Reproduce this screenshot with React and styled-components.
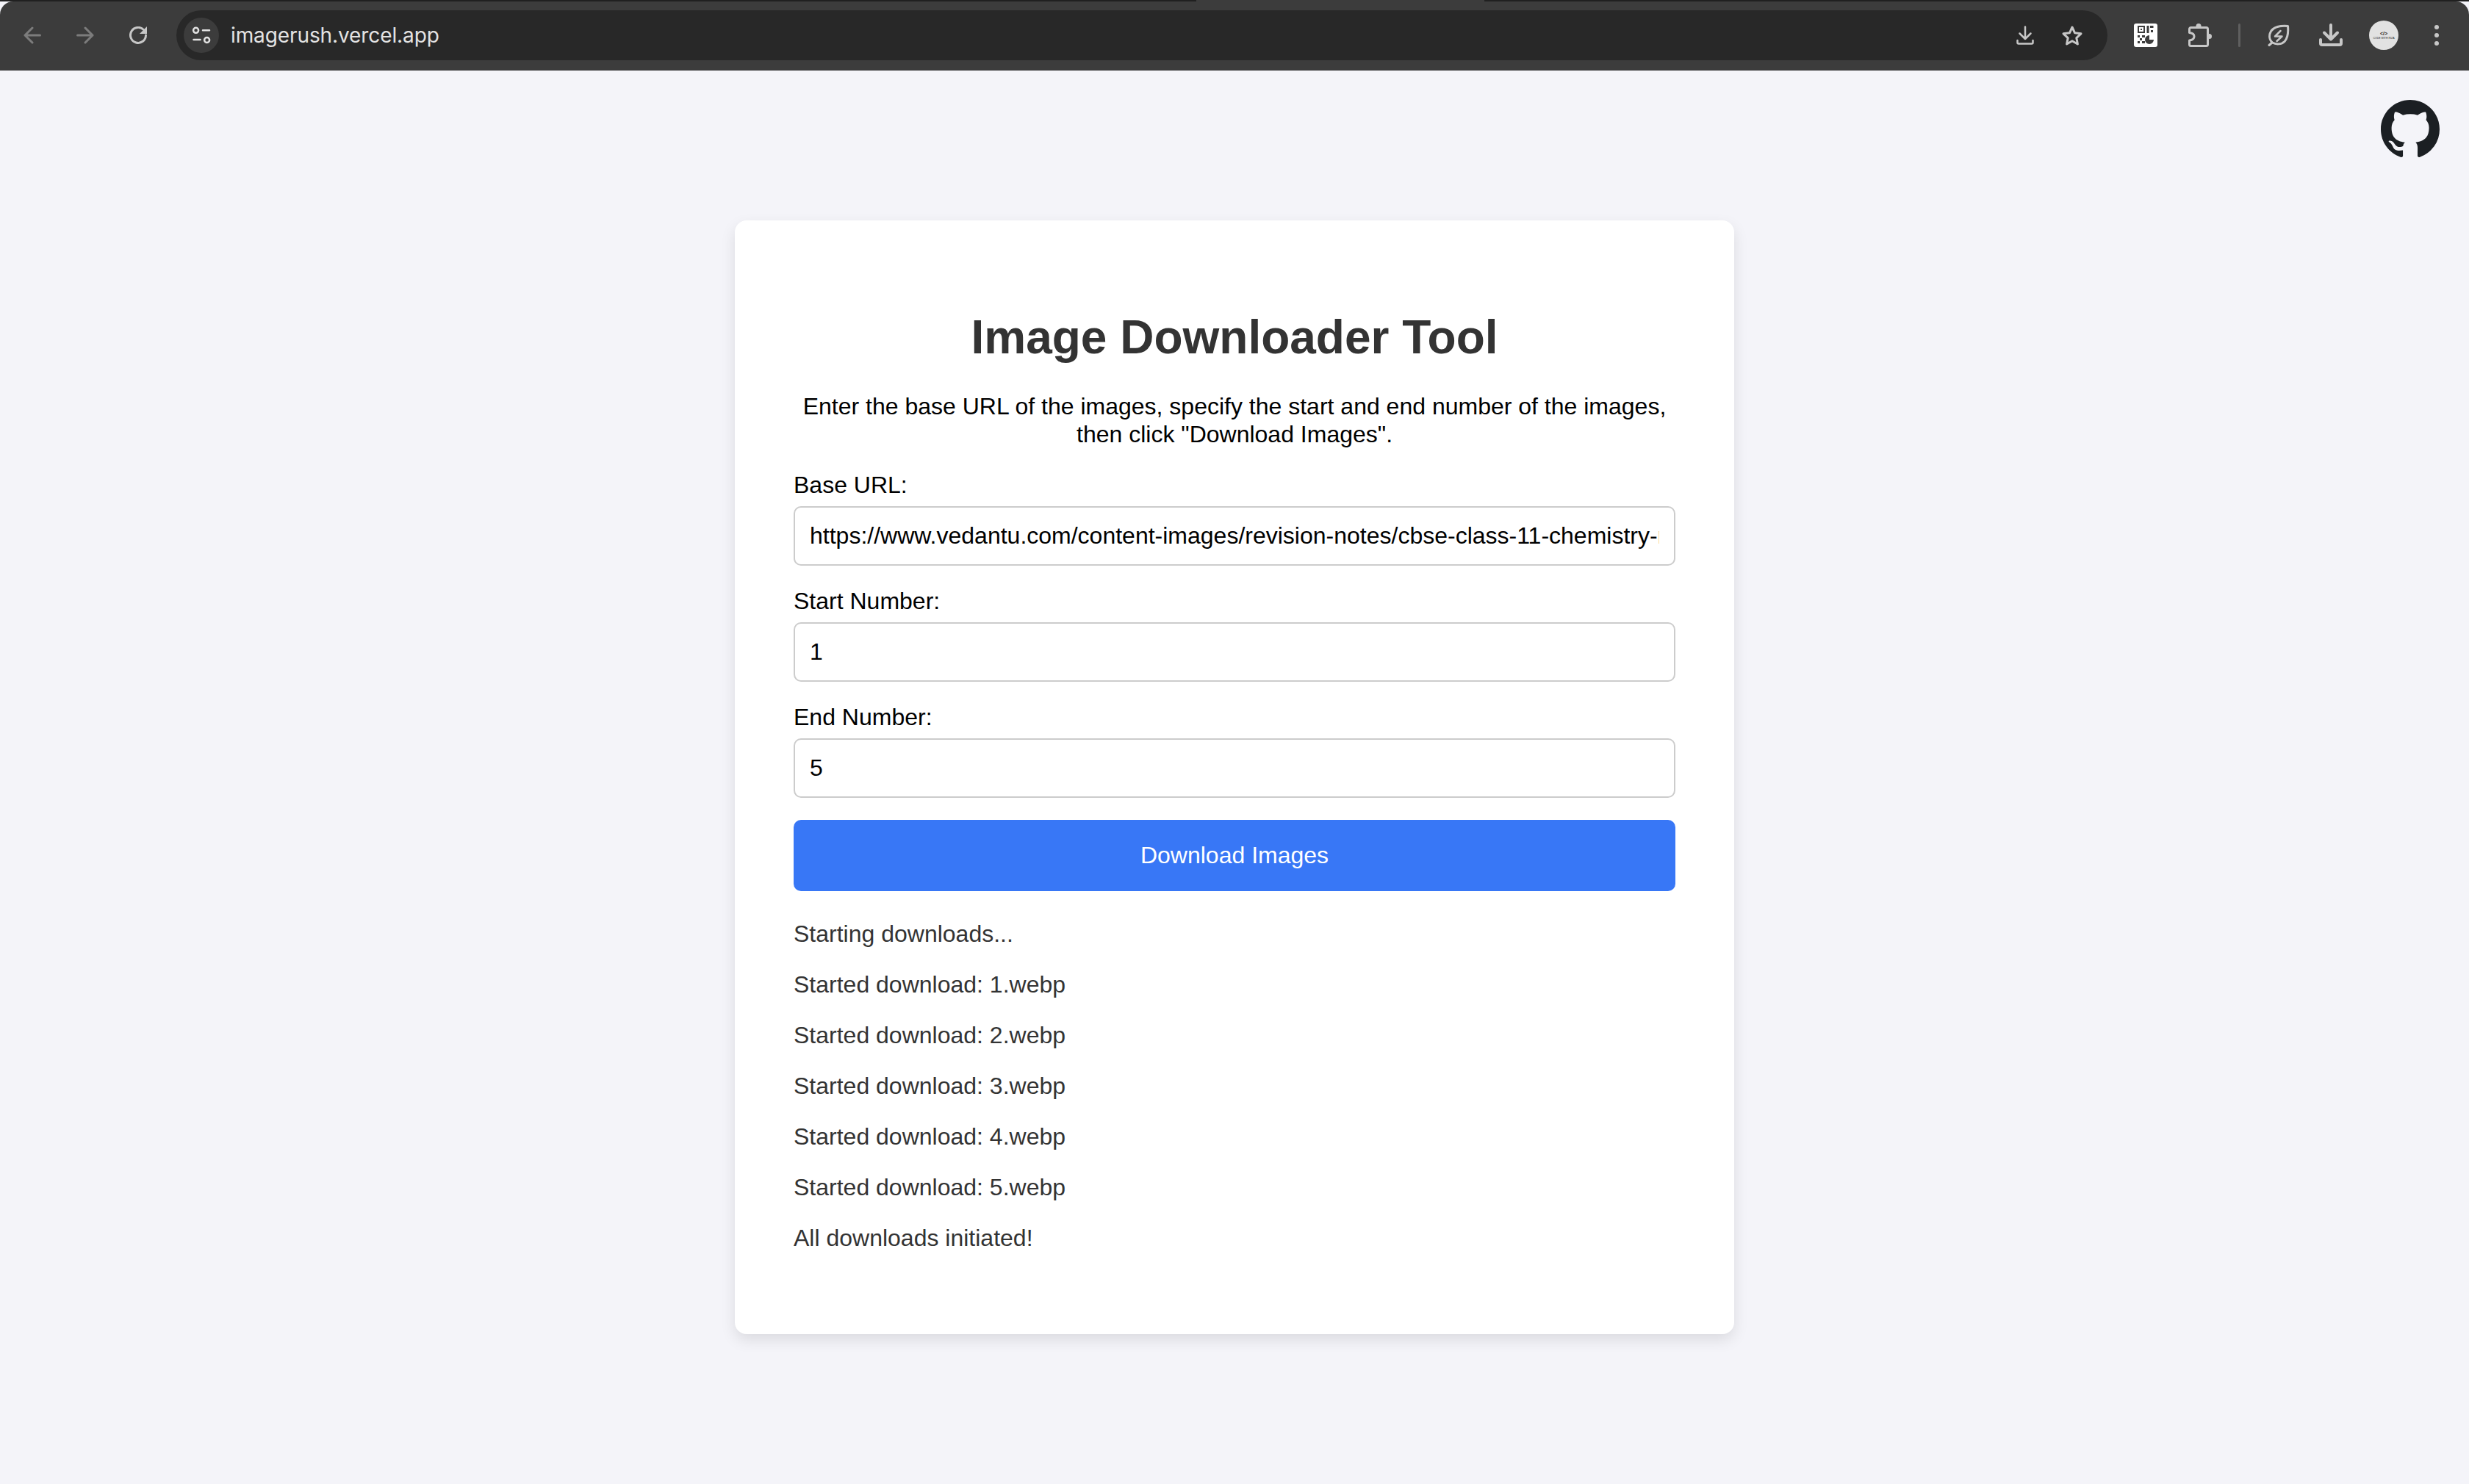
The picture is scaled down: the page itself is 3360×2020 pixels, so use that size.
import React from 'react';
import styled, { createGlobalStyle } from 'styled-components';

const GlobalStyle = createGlobalStyle`
  html, body {
    margin: 0;
    padding: 0;
    background-color: #f4f4f9;
  }
`;

const LOG_LINES = [
  'Starting downloads...',
  'Started download: 1.webp',
  'Started download: 2.webp',
  'Started download: 3.webp',
  'Started download: 4.webp',
  'Started download: 5.webp',
  'All downloads initiated!',
];

function Glyph({ w = 24, h = 24, sw = 3, children }) {
  return (
    <svg width={w} height={h} viewBox={`0 0 ${w} ${h}`} fill='none' stroke='currentColor' strokeWidth={sw} strokeLinecap='round' strokeLinejoin='round'>
      {children}
    </svg>
  );
}

function QrIcon() {
  return (
    <svg width='32' height='32' viewBox='0 0 32 32'>
      <rect width='32' height='32' rx='3' fill='#fff' />
      <g fill='#3c3c3c'>
        <path fillRule='evenodd' d='M5 3h10v10H5zM7 5v6h6V5z' />
        <rect x='9' y='7' width='2' height='2' />
        <rect x='17.500' y='3' width='3' height='10' />
        <rect x='22' y='3' width='4.500' height='3' />
        <rect x='23' y='9' width='3' height='3' />
        <rect x='5' y='16' width='3' height='3' />
        <rect x='11' y='16' width='4' height='3' />
        <rect x='8' y='20' width='3' height='3' />
        <rect x='5' y='24' width='3' height='3' />
        <rect x='11' y='24' width='4' height='3' />
        <path d='M21 16a6 6 0 1 0 6 6h-6z' />
      </g>
    </svg>
  );
}

function GithubMark() {
  return (
    <svg width='80' height='80' viewBox='0 0 16 16' fill='#1b1f23'>
      <path d='M8 0C3.58 0 0 3.58 0 8c0 3.54 2.29 6.53 5.47 7.59.4.07.55-.17.55-.38 0-.19-.01-.82-.01-1.49-2.01.37-2.53-.49-2.69-.94-.09-.23-.48-.94-.82-1.13-.28-.15-.68-.52-.01-.53.63-.01 1.08.58 1.23.82.72 1.21 1.87.87 2.33.66.07-.52.28-.87.51-1.07-1.78-.2-3.64-.89-3.64-3.95 0-.87.31-1.59.82-2.15-.08-.2-.36-1.02.08-2.12 0 0 .67-.21 2.2.82.64-.18 1.32-.27 2-.27s1.36.09 2 .27c1.53-1.04 2.2-.82 2.2-.82.44 1.1.16 1.92.08 2.12.51.56.82 1.27.82 2.15 0 3.07-1.87 3.75-3.65 3.95.29.25.54.73.54 1.48 0 1.07-.01 1.93-.01 2.2 0 .21.15.46.55.38A8.01 8.01 0 0 0 16 8c0-4.42-3.58-8-8-8z' />
    </svg>
  );
}

export default function App() {
  return (
    <Page>
      <GlobalStyle />
      <TabStrip>
        <ActiveTabEdge />
      </TabStrip>
      <Toolbar>
        <NavIcon $dim>
          <Glyph><path d='M22.500 12H2M12 2 2 12l10 10' /></Glyph>
        </NavIcon>
        <NavIcon $dim>
          <Glyph><path d='M1.500 12H22M12 2l10 10-10 10' /></Glyph>
        </NavIcon>
        <NavIcon>
          <Glyph>
            <path d='M22.500 12A10.500 10.500 0 1 1 19.500 4.500' />
            <path d='M24 0v10H14z' fill='currentColor' stroke='none' />
          </Glyph>
        </NavIcon>
        <AddressBar>
          <SiteChip>
            <Glyph w={48} h={48} sw={2.500}>
              <circle cx='16.600' cy='17.300' r='3.500' />
              <path d='M26 17.300h9M13.500 30h9' />
              <circle cx='31.600' cy='30.500' r='3.500' />
            </Glyph>
          </SiteChip>
          <UrlText>imagerush.vercel.app</UrlText>
          <BarActions>
            <Glyph w={24} h={26} sw={2.500}>
              <path d='M12 1.500v16.500M4.500 10.500 12 18l7.500-7.500' />
              <path d='M1.500 20v3a1.500 1.500 0 0 0 1.500 1.500h18a1.500 1.500 0 0 0 1.500-1.500v-3' />
            </Glyph>
            <Glyph w={30} h={29}>
              <path d='M15 3l3.600 7.800 8.400 1-6.200 5.800 1.600 8.400-7.400-4.200-7.400 4.200 1.600-8.400L3 11.800l8.400-1z' />
            </Glyph>
          </BarActions>
        </AddressBar>
        <Extensions>
          <ToolSlot $w={72}>
            <QrIcon />
          </ToolSlot>
          <ToolSlot $w={76}>
            <Glyph w={32} h={32}>
              <path d='M3.500 5.500h21a2 2 0 0 1 2 2v21a2 2 0 0 1-2 2h-21a2 2 0 0 1-2-2V23c4.500-.500 6.500-3 6.500-5.500S6 13 1.500 12.500v-5a2 2 0 0 1 2-2z' />
              <circle cx='14' cy='3.500' r='3.500' fill='currentColor' stroke='none' />
              <circle cx='28.500' cy='17.500' r='3.500' fill='currentColor' stroke='none' />
            </Glyph>
          </ToolSlot>
          <ToolSlot $w={30}>
            <Divider />
          </ToolSlot>
          <ToolSlot $w={78}>
            <Glyph w={30} h={30}>
              <path d='M27.500 2.500c1 10.500-.500 16.500-4.500 21-4 4-11.500 4.500-16.500 1.500C2 21 1.500 15 4.500 9.500 8 4 17 1.500 27.500 2.500z' />
              <path d='M6 25l-4 3.500' />
              <path d='M17.500 9 10 16.500h9.500L12.500 23' strokeWidth='2.500' />
            </Glyph>
          </ToolSlot>
          <ToolSlot $w={64}>
            <Glyph w={32} h={32} sw={4}>
              <path d='M16 2v19M7 12.500l9 9 9-9' />
              <path d='M2 22v5a2 2 0 0 0 2 2h24a2 2 0 0 0 2-2v-5' />
            </Glyph>
          </ToolSlot>
          <ToolSlot $w={80}>
            <Avatar>
              <AvatarGlyph>&lt;/&gt;</AvatarGlyph>
              <AvatarName>CODE WITH RIZA</AvatarName>
            </Avatar>
          </ToolSlot>
          <ToolSlot $w={64}>
            <MenuDots>
              <span />
              <span />
              <span />
            </MenuDots>
          </ToolSlot>
        </Extensions>
      </Toolbar>

      <Content>
        <GithubLink>
          <GithubMark />
        </GithubLink>
        <Card>
          <Title>Image Downloader Tool</Title>
          <Intro>
            Enter the base URL of the images, specify the start and end number of the images,
            <br />
            then click "Download Images".
          </Intro>
          <Field>
            <Label>Base URL:</Label>
            <Input readOnly value='https://www.vedantu.com/content-images/revision-notes/cbse-class-11-chemistry-notes/' />
          </Field>
          <Field>
            <Label>Start Number:</Label>
            <Input readOnly value='1' />
          </Field>
          <Field>
            <Label>End Number:</Label>
            <Input readOnly value='5' />
          </Field>
          <DownloadButton>Download Images</DownloadButton>
          <Log>
            {LOG_LINES.map((line) => (
              <LogLine key={line}>{line}</LogLine>
            ))}
          </Log>
        </Card>
      </Content>
    </Page>
  );
}

const Page = styled.div`
  width: 3360px;
  height: 2020px;
  overflow: hidden;
  display: flex;
  flex-direction: column;
  background-color: #f4f4f9;
  font-family: 'Liberation Sans', Arial, sans-serif;
`;

const TabStrip = styled.div`
  height: 2px;
  flex-shrink: 0;
  padding-left: 1628px;
  background-color: #202020;
`;

const ActiveTabEdge = styled.div`
  width: 392px;
  height: 2px;
  background-color: #3c3c3c;
`;

const Toolbar = styled.header`
  height: 94px;
  flex-shrink: 0;
  box-sizing: border-box;
  padding-bottom: 2px;
  display: flex;
  align-items: center;
  background-color: #3c3c3c;
  border-radius: 18px 18px 0 0;
  color: #c7c7c7;
`;

const NavIcon = styled.span`
  width: 72px;
  display: flex;
  justify-content: center;
  color: ${(props) => (props.$dim ? '#7c7c7c' : '#c7c7c7')};
  &:first-child {
    margin-left: 8px;
  }
`;

const AddressBar = styled.div`
  margin-left: 16px;
  width: 2628px;
  height: 68px;
  flex-shrink: 0;
  display: flex;
  align-items: center;
  padding: 0 33px 0 10px;
  box-sizing: border-box;
  background-color: #282828;
  border-radius: 34px;
`;

const SiteChip = styled.span`
  width: 48px;
  height: 48px;
  border-radius: 50%;
  display: flex;
  background-color: #3c3c3c;
  color: #e3e3e3;
`;

const UrlText = styled.span`
  margin-left: 16px;
  font-family: 'Inter', sans-serif;
  font-size: 28px;
  letter-spacing: -0.1px;
  color: #e3e3e3;
`;

const BarActions = styled.div`
  margin-left: auto;
  display: flex;
  align-items: center;
  gap: 37px;
`;

const Extensions = styled.div`
  margin-left: 16px;
  display: flex;
  align-items: center;
`;

const ToolSlot = styled.span`
  width: ${(props) => props.$w}px;
  display: flex;
  justify-content: center;
  align-items: center;
`;

const Divider = styled.span`
  width: 3px;
  height: 32px;
  border-radius: 2px;
  background-color: #5f5f5f;
`;

const Avatar = styled.span`
  width: 40px;
  height: 40px;
  border-radius: 50%;
  display: flex;
  flex-direction: column;
  align-items: center;
  justify-content: center;
  background-color: #e2e2e2;
  color: #222;
`;

const AvatarGlyph = styled.span`
  font-size: 7px;
  line-height: 7px;
  font-weight: 700;
`;

const AvatarName = styled.span`
  font-size: 3.500px;
  line-height: 6px;
  white-space: nowrap;
`;

const MenuDots = styled.span`
  display: flex;
  flex-direction: column;
  gap: 5px;
  span {
    width: 6px;
    height: 6px;
    border-radius: 50%;
    background-color: #c7c7c7;
  }
`;

const Content = styled.main`
  position: relative;
  flex: 1;
  display: flex;
  justify-content: center;
  align-items: flex-start;
  padding-top: 204px;
`;

const GithubLink = styled.a`
  position: absolute;
  top: 40px;
  right: 40px;
  display: flex;
`;

const Card = styled.section`
  width: 1360px;
  padding: 80px 80px 112px;
  box-sizing: border-box;
  display: flex;
  flex-direction: column;
  background-color: #fff;
  border-radius: 16px;
  box-shadow: 0 8px 20px rgba(0, 0, 0, 0.1);
`;

const Title = styled.h1`
  margin: 40px 0 0;
  text-align: center;
  font-size: 64px;
  line-height: 78px;
  font-weight: 700;
  color: #333;
`;

const Intro = styled.p`
  margin: 36px 0 31px;
  text-align: center;
  font-size: 32px;
  line-height: 38px;
  color: #000;
`;

const Field = styled.div`
  margin-bottom: 29px;
  display: flex;
  flex-direction: column;
`;

const Label = styled.label`
  font-size: 32px;
  line-height: 38px;
  margin-bottom: 10px;
  color: #000;
`;

const Input = styled.input`
  width: 100%;
  height: 81px;
  padding: 0 20px;
  box-sizing: border-box;
  border: 2px solid #ccc;
  border-radius: 10px;
  font-family: 'Liberation Sans', Arial, sans-serif;
  font-size: 32px;
  color: #000;
  background-color: #fff;
  outline: none;
`;

const DownloadButton = styled.button`
  margin-top: 1px;
  width: 100%;
  height: 97px;
  flex-shrink: 0;
  border: none;
  border-radius: 10px;
  background-color: #3877f6;
  color: #fff;
  font-family: 'Liberation Sans', Arial, sans-serif;
  font-size: 32px;
`;

const Log = styled.div`
  margin-top: 39px;
  display: flex;
  flex-direction: column;
  gap: 31px;
`;

const LogLine = styled.p`
  margin: 0;
  font-size: 32px;
  line-height: 38px;
  color: #333;
`;
